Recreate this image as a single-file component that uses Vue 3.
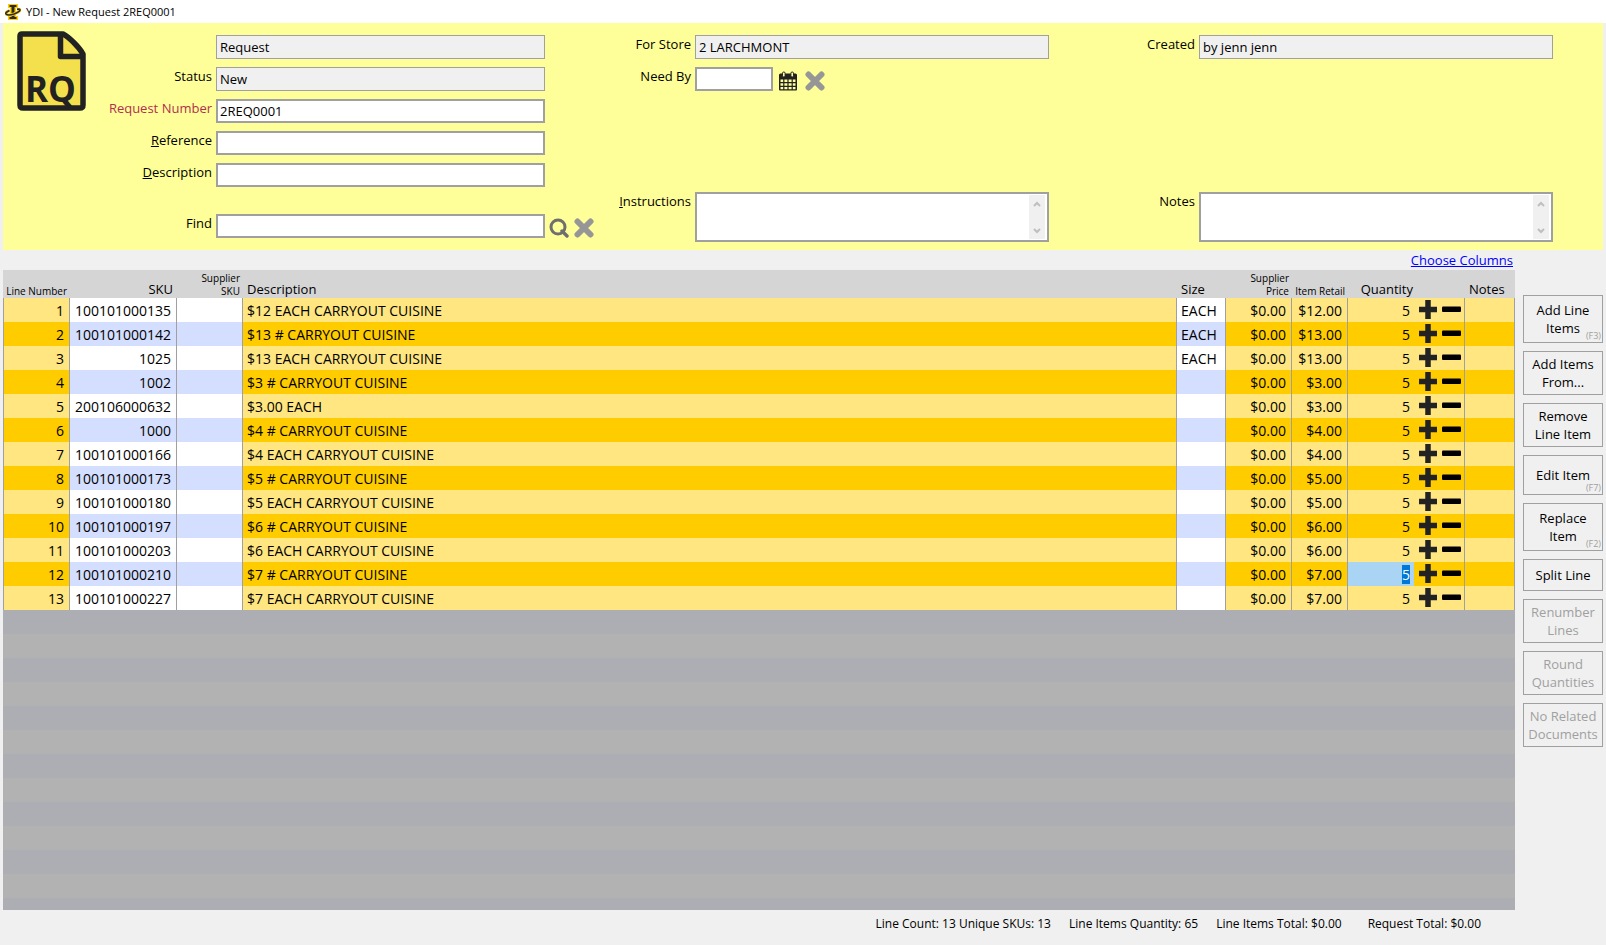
<template>
    <div class="window">
        <header class="title-bar">
            <svg class="app-icon" width="16" height="18" viewBox="0 0 16 18" aria-hidden="true">
                <path d="M3 1h10v4h-2v8h2v4H3v-4h2V5H3z" fill="#ffcc00" />
                <path d="M4.500 2h7v2h-2v10h2v2h-7v-2h2V4h-2z" fill="#2b2b2b" />
                <path d="M4.500 7.500Q0 9.500 1 11Q3 13 9 11Q15.500 8.500 15 6.800Q14.500 5.800 12 6.300" fill="none" stroke="#ffcc00" stroke-width="3" />
                <path d="M4.500 7.500Q0 9.500 1 11Q3 13 9 11Q15.500 8.500 15 6.800Q14.500 5.800 12 6.300" fill="none" stroke="#2b2b2b" stroke-width="1.600" />
            </svg>
            <span>YDI - New Request 2REQ0001</span>
        </header>

        <form class="request-form" @submit.prevent>
            <svg class="doc-icon" width="70" height="80" viewBox="0 0 70 80" aria-hidden="true">
                <path d="M5 3H46C52 6 62 16 66 23V74Q66 77 63 77H6Q3 77 3 74V5Q3 3 5 3Z" fill="#f4e04c" stroke="#222" stroke-width="5.500" stroke-linejoin="round" />
                <path d="M43.500 4V25.500H66" fill="none" stroke="#222" stroke-width="5.500" stroke-linejoin="round" />
                <text x="8" y="71" class="doc-text">RQ</text>
            </svg>

            <section class="column left">
                <div class="row">
                    <span></span>
                    <input class="field" value="Request" aria-label="Document type" readonly>
                </div>
                <div class="row">
                    <label for="status">Status</label>
                    <input id="status" class="field" value="New" readonly>
                </div>
                <div class="row">
                    <label for="number" class="required">Request Number</label>
                    <input id="number" v-model="requestNumber" class="field">
                </div>
                <div class="row">
                    <label for="reference"><u>R</u>eference</label>
                    <input id="reference" v-model="reference" class="field">
                </div>
                <div class="row">
                    <label for="description"><u>D</u>escription</label>
                    <input id="description" v-model="description" class="field">
                </div>
                <div class="row find-row">
                    <label for="find">Find</label>
                    <input id="find" v-model="find" class="field">
                    <div class="tools">
                        <button type="button" class="icon-button" aria-label="Search">
                            <svg width="20" height="20" viewBox="0 0 20 20">
                                <circle cx="9" cy="9" r="7" fill="none" stroke="#6e6e6e" stroke-width="3" />
                                <path d="M13 13l5 5" stroke="#6e6e6e" stroke-width="3.400" stroke-linecap="round" />
                            </svg>
                        </button>
                        <button type="button" class="icon-button" aria-label="Clear find" @click="find = ''">
                            <svg width="20" height="20" viewBox="0 0 20 20">
                                <path d="M3.500 3.500l13 13M16.500 3.500l-13 13" stroke="#969696" stroke-width="6" stroke-linecap="round" />
                            </svg>
                        </button>
                    </div>
                </div>
            </section>

            <section class="column middle">
                <div class="row">
                    <label for="store">For Store</label>
                    <input id="store" class="field" value="2 LARCHMONT" readonly>
                </div>
                <div class="row">
                    <label for="need-by">Need By</label>
                    <div class="date">
                        <input id="need-by" v-model="needBy" class="field">
                        <div class="tools">
                            <button type="button" class="icon-button" aria-label="Pick date">
                                <svg width="20" height="20" viewBox="0 0 20 20">
                                    <path d="M1 4Q1 2.500 2.500 2.500H17.500Q19 2.500 19 4V18.500Q19 19.500 18 19.500H2Q1 19.500 1 18.500Z" fill="#222" />
                                    <path d="M2.500 8.500h2.700v2.500H2.500zM6.400 8.500h3v2.500h-3zM10.600 8.500h3v2.500h-3zM14.800 8.500h2.700v2.500h-2.700zM2.500 12.200h2.700v2.500H2.500zM6.400 12.200h3v2.500h-3zM10.600 12.200h3v2.500h-3zM14.800 12.200h2.700v2.500h-2.700zM2.500 15.900h2.700v2.300H2.500zM6.400 15.900h3v2.300h-3zM10.600 15.900h3v2.300h-3zM14.800 15.900h2.700v2.300h-2.700z" fill="#ffff99" />
                                    <rect x="4.500" y="1" width="2.600" height="5" rx="1.200" fill="#ffff99" stroke="#222" />
                                    <rect x="12.900" y="1" width="2.600" height="5" rx="1.200" fill="#ffff99" stroke="#222" />
                                </svg>
                            </button>
                            <button type="button" class="icon-button" aria-label="Clear date" @click="needBy = ''">
                                <svg width="20" height="20" viewBox="0 0 20 20">
                                    <path d="M3.500 3.500l13 13M16.500 3.500l-13 13" stroke="#969696" stroke-width="6" stroke-linecap="round" />
                                </svg>
                            </button>
                        </div>
                    </div>
                </div>
                <div class="row memo-row">
                    <label for="instructions"><u>I</u>nstructions</label>
                    <div class="memo">
                        <textarea id="instructions" v-model="instructions"></textarea>
                        <div class="gutter">
                            <svg width="8" height="8" viewBox="0 0 8 8"><path d="M1 6l3-3 3 3" /></svg>
                            <svg width="8" height="8" viewBox="0 0 8 8"><path d="M1 2l3 3 3-3" /></svg>
                        </div>
                    </div>
                </div>
            </section>

            <section class="column right">
                <div class="row">
                    <label for="created">Created</label>
                    <input id="created" class="field" value="by jenn jenn" readonly>
                </div>
                <div class="row memo-row">
                    <label for="notes">Notes</label>
                    <div class="memo">
                        <textarea id="notes" v-model="notes"></textarea>
                        <div class="gutter">
                            <svg width="8" height="8" viewBox="0 0 8 8"><path d="M1 6l3-3 3 3" /></svg>
                            <svg width="8" height="8" viewBox="0 0 8 8"><path d="M1 2l3 3 3-3" /></svg>
                        </div>
                    </div>
                </div>
            </section>
        </form>

        <main class="body">
            <div class="lines">
                <div class="choose"><a href="#">Choose Columns</a></div>
                <table>
                    <colgroup>
                        <col class="c-line">
                        <col class="c-sku">
                        <col class="c-supplier">
                        <col>
                        <col class="c-size">
                        <col class="c-supplier">
                        <col class="c-retail">
                        <col class="c-quantity">
                        <col class="c-notes">
                    </colgroup>
                    <thead>
                        <tr>
                            <th class="small num">Line Number</th>
                            <th class="num">SKU</th>
                            <th class="small num">Supplier SKU</th>
                            <th>Description</th>
                            <th>Size</th>
                            <th class="small num">Supplier Price</th>
                            <th class="small num">Item Retail</th>
                            <th class="quantity-head">Quantity</th>
                            <th>Notes</th>
                        </tr>
                    </thead>
                    <tbody>
                        <tr v-for="(item, index) in items" :key="item.sku">
                            <td class="num">{{ index + 1 }}</td>
                            <td class="num plain">{{ item.sku }}</td>
                            <td class="plain"></td>
                            <td>{{ item.description }}</td>
                            <td class="plain">{{ item.size }}</td>
                            <td class="num">$0.00</td>
                            <td class="num">{{ item.retail }}</td>
                            <td class="quantity-cell">
                                <div class="quantity">
                                    <input ref="quantityInputs" v-model.number="item.quantity" :aria-label="'Quantity for line ' + (index + 1)">
                                    <button type="button" class="icon-button" aria-label="Increase" @click="item.quantity++">
                                        <svg width="20" height="20" viewBox="0 0 20 20">
                                            <path d="M10 0v19M1 9.500h18" stroke="#222" stroke-width="5.500" />
                                        </svg>
                                    </button>
                                    <button type="button" class="icon-button" aria-label="Decrease" @click="item.quantity--">
                                        <svg width="20" height="20" viewBox="0 0 20 20">
                                            <rect x="0" y="6.500" width="19" height="5.500" rx="1" fill="#000" />
                                        </svg>
                                    </button>
                                </div>
                            </td>
                            <td></td>
                        </tr>
                    </tbody>
                </table>
                <div class="empty-rows"></div>
            </div>

            <aside class="actions">
                <button v-for="action in actions" :key="action.label" type="button" class="action" :class="action.kind" :disabled="action.disabled">
                    <span class="caption">{{ action.label }}</span>
                    <span v-if="action.shortcut" class="shortcut">({{ action.shortcut }})</span>
                </button>
            </aside>
        </main>

        <footer class="totals">
            <span>Line Count: {{ items.length }} Unique SKUs: {{ items.length }}</span>
            <span>Line Items Quantity: {{ totalQuantity }}</span>
            <span>Line Items Total: $0.00</span>
            <span class="request-total">Request Total: $0.00</span>
        </footer>
    </div>
</template>

<script setup>
import { ref, computed, onMounted } from 'vue';

const requestNumber = ref('2REQ0001');
const reference = ref('');
const description = ref('');
const find = ref('');
const needBy = ref('');
const instructions = ref('');
const notes = ref('');
const quantityInputs = ref([]);

const items = ref([
    { sku: '100101000135', description: '$12 EACH CARRYOUT CUISINE', size: 'EACH', retail: '$12.00', quantity: 5 },
    { sku: '100101000142', description: '$13 # CARRYOUT CUISINE', size: 'EACH', retail: '$13.00', quantity: 5 },
    { sku: '1025', description: '$13 EACH CARRYOUT CUISINE', size: 'EACH', retail: '$13.00', quantity: 5 },
    { sku: '1002', description: '$3 # CARRYOUT CUISINE', size: '', retail: '$3.00', quantity: 5 },
    { sku: '200106000632', description: '$3.00 EACH', size: '', retail: '$3.00', quantity: 5 },
    { sku: '1000', description: '$4 # CARRYOUT CUISINE', size: '', retail: '$4.00', quantity: 5 },
    { sku: '100101000166', description: '$4 EACH CARRYOUT CUISINE', size: '', retail: '$4.00', quantity: 5 },
    { sku: '100101000173', description: '$5 # CARRYOUT CUISINE', size: '', retail: '$5.00', quantity: 5 },
    { sku: '100101000180', description: '$5 EACH CARRYOUT CUISINE', size: '', retail: '$5.00', quantity: 5 },
    { sku: '100101000197', description: '$6 # CARRYOUT CUISINE', size: '', retail: '$6.00', quantity: 5 },
    { sku: '100101000203', description: '$6 EACH CARRYOUT CUISINE', size: '', retail: '$6.00', quantity: 5 },
    { sku: '100101000210', description: '$7 # CARRYOUT CUISINE', size: '', retail: '$7.00', quantity: 5 },
    { sku: '100101000227', description: '$7 EACH CARRYOUT CUISINE', size: '', retail: '$7.00', quantity: 5 }
]);

const actions = [
    { label: 'Add Line Items', shortcut: 'F3', kind: 'tall' },
    { label: 'Add Items From...' },
    { label: 'Remove Line Item' },
    { label: 'Edit Item', shortcut: 'F7', kind: 'medium' },
    { label: 'Replace Item', shortcut: 'F2', kind: 'tall' },
    { label: 'Split Line', kind: 'short' },
    { label: 'Renumber Lines', disabled: true },
    { label: 'Round Quantities', disabled: true },
    { label: 'No Related Documents', disabled: true }
];

const totalQuantity = computed(() => {
    return items.value.reduce((sum, item) => sum + Number(item.quantity), 0);
});

onMounted(() => {
    const input = quantityInputs.value[11];
    input.focus();
    input.select();
});
</script>

<style>
body {
    margin: 0;
    background-color: #f0f0f0;
}
</style>

<style scoped>
.window {
    min-height: 100vh;
    display: flex;
    flex-direction: column;
    background-color: #f0f0f0;
    color: #000;
    font-family: "Open Sans", "Noto Sans", sans-serif;
    font-size: 13px;
    line-height: 18px;
}

* {
    box-sizing: border-box;
}

input,
textarea,
button {
    font: inherit;
    color: inherit;
}

.title-bar {
    height: 23px;
    display: flex;
    align-items: center;
    gap: 5px;
    padding-left: 5px;
    background-color: #fff;
    font-size: 11px;
}

.request-form {
    position: relative;
    display: grid;
    grid-template-columns: 592fr 454fr 554fr;
    margin: 0 3px;
    padding: 12px 0 8px;
    background-color: #ffff99;
}

.doc-icon {
    position: absolute;
    left: 14px;
    top: 8px;
}

.doc-text {
    font-size: 35px;
    font-weight: 700;
    fill: #222;
}

.column {
    display: flex;
    flex-direction: column;
    gap: 8px;
}

.row {
    display: grid;
    gap: 4px;
    align-items: start;
}

.left .row {
    grid-template-columns: 209px 1fr 46px;
}

.middle .row {
    grid-template-columns: 96px 1fr;
}

.right .row {
    grid-template-columns: 146px 1fr;
}

.right {
    padding-right: 50px;
}

.left .find-row {
    margin: 19px 0 4px;
}

.middle .memo-row,
.right .memo-row {
    margin-top: auto;
}

.row label {
    text-align: right;
}

.required {
    color: #b03050;
}

.field {
    width: 100%;
    height: 24px;
    padding: 0 2px;
    border: 2px solid #a0a0a0;
    border-radius: 0;
    background-color: #fff;
    outline: none;
}

.field:read-only {
    padding: 0 3px;
    border-width: 1px;
    background-color: #f0f0f0;
}

.tools {
    display: flex;
    gap: 5px;
    padding-top: 4px;
}

.date {
    display: flex;
    gap: 5px;
}

.date .field {
    width: 78px;
}

.date .tools {
    gap: 7px;
}

.icon-button {
    display: block;
    padding: 0;
    border: none;
    background: none;
}

.icon-button svg {
    display: block;
}

.memo {
    display: flex;
    height: 50px;
    padding: 1px 2px 1px 0;
    border: 2px solid #a0a0a0;
    background-color: #fff;
}

.memo textarea {
    flex: 1;
    min-width: 0;
    padding: 0 2px;
    border: none;
    outline: none;
    resize: none;
}

.gutter {
    width: 16px;
    display: flex;
    flex-direction: column;
    align-items: center;
    justify-content: space-between;
    padding: 5px 0 4px;
    background-color: #f0f0f0;
}

.gutter path {
    fill: none;
    stroke: #bfbfbf;
    stroke-width: 2;
}

.body {
    flex: 1;
    display: flex;
    gap: 8px;
    padding: 0 3px;
}

.lines {
    flex: 1;
    min-width: 0;
    display: flex;
    flex-direction: column;
}

.choose {
    height: 20px;
    padding: 1px 2px;
    text-align: right;
}

.choose a {
    color: #0000ff;
}

table {
    width: 100%;
    table-layout: fixed;
    border-collapse: separate;
    border-spacing: 0;
}

.c-line {
    width: 67px;
}

.c-sku {
    width: 107px;
}

.c-supplier {
    width: 66px;
}

.c-size {
    width: 49px;
}

.c-retail {
    width: 56px;
}

.c-quantity {
    width: 117px;
}

.c-notes {
    width: 50px;
}

th {
    height: 28px;
    padding: 0 4px;
    background-color: #d5d5d5;
    font-weight: 400;
    text-align: left;
    vertical-align: bottom;
}

th.small {
    padding: 0 3px;
    font-size: 10px;
    line-height: 13px;
}

td {
    height: 24px;
    padding: 1px 4px 0;
    border-right: 1px solid #a0a0a0;
    background-color: #ffe680;
    font-size: 14px;
    white-space: nowrap;
}

td:first-child {
    border-left: 1px solid #a0a0a0;
}

td.plain {
    background-color: #fff;
}

tr:nth-child(even) td {
    background-color: #ffcc00;
}

tr:nth-child(even) td.plain {
    background-color: #d4deff;
}

.num {
    text-align: right;
}

td.num {
    padding-right: 5px;
}

th.quantity-head {
    padding-right: 52px;
    text-align: right;
}

td.quantity-cell {
    padding: 0;
}

.quantity {
    display: flex;
    gap: 4px;
    padding-right: 2px;
}

.quantity input {
    flex: 1;
    min-width: 0;
    height: 24px;
    padding: 0 4px 0 0;
    border: none;
    outline: none;
    background: none;
    text-align: right;
}

.quantity input:focus {
    background-color: #aad4f4;
}

.quantity input::selection {
    background-color: #0078d7;
    color: #fff;
}

.empty-rows {
    flex: 1;
    background: repeating-linear-gradient(#acaeb3 0 24px, #b2b2b2 24px 48px);
}

.actions {
    width: 80px;
    display: flex;
    flex-direction: column;
    gap: 8px;
    padding-top: 45px;
}

.action {
    position: relative;
    min-height: 44px;
    padding: 0 3px;
    border: 1px solid #a0a0a0;
    background-color: #f0f0f0;
}

.action.short {
    min-height: 32px;
}

.action.medium {
    min-height: 40px;
}

.action.tall {
    min-height: 48px;
}

.action:disabled {
    color: #a0a0a0;
}

.caption {
    display: block;
}

.shortcut {
    position: absolute;
    right: 1px;
    bottom: 0;
    color: #a0a0a0;
    font-size: 9px;
    line-height: 12px;
}

.totals {
    display: flex;
    justify-content: flex-end;
    gap: 18px;
    height: 35px;
    padding: 5px 125px 0 0;
    font-size: 12px;
}

.request-total {
    margin-left: 8px;
}
</style>
